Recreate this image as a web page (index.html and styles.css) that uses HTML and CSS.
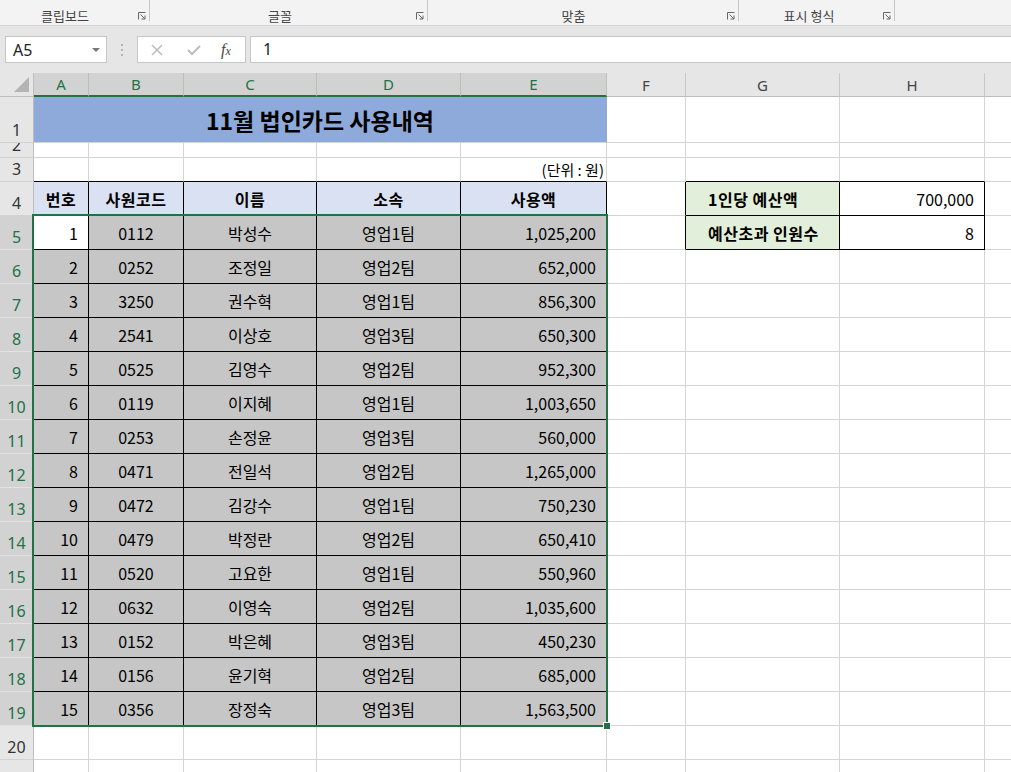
FILE: index.html
```html
<!DOCTYPE html>
<html>
<head>
    <title>11월 법인카드 사용내역</title>
    <link rel="stylesheet" href="styles.css">
</head>
<body>
    <div class="ribbon">
        <div class="grp g1"><span class="glabel">클립보드</span><svg class="launch" width="8" height="8" viewBox="0 0 8 8"><path d="M0.5 7.5 V0.5 H7.5 M2.5 2.5 L7 7 M7 3.5 V7 H3.5" stroke="#666" stroke-width="1" fill="none"/></svg></div><span class="sep"></span>
        <div class="grp g2"><span class="glabel">글꼴</span><svg class="launch" width="8" height="8" viewBox="0 0 8 8"><path d="M0.5 7.5 V0.5 H7.5 M2.5 2.5 L7 7 M7 3.5 V7 H3.5" stroke="#666" stroke-width="1" fill="none"/></svg></div><span class="sep"></span>
        <div class="grp g3"><span class="glabel">맞춤</span><svg class="launch" width="8" height="8" viewBox="0 0 8 8"><path d="M0.5 7.5 V0.5 H7.5 M2.5 2.5 L7 7 M7 3.5 V7 H3.5" stroke="#666" stroke-width="1" fill="none"/></svg></div><span class="sep"></span>
        <div class="grp g4"><span class="glabel">표시 형식</span><svg class="launch" width="8" height="8" viewBox="0 0 8 8"><path d="M0.5 7.5 V0.5 H7.5 M2.5 2.5 L7 7 M7 3.5 V7 H3.5" stroke="#666" stroke-width="1" fill="none"/></svg></div><span class="sep"></span>
    </div>

    <div class="fbar">
        <div class="namebox"><span>A5</span><span class="drop"></span></div>
        <div class="grip">
            <svg width="3" height="14" viewBox="0 0 3 14"><rect x="0" y="0" width="2" height="2" fill="#b4b4b4"/><rect x="0" y="5" width="2" height="2" fill="#b4b4b4"/><rect x="0" y="10" width="2" height="2" fill="#b4b4b4"/></svg>
        </div>
        <div class="fbtns">
            <svg class="fbtn" width="12" height="12" viewBox="0 0 12 12"><path d="M1 1 L11 11 M11 1 L1 11" stroke="#bdbdbd" stroke-width="1.6" fill="none"/></svg>
            <svg class="fbtn" width="14" height="12" viewBox="0 0 14 12"><path d="M1 6 L5 10 L13 2" stroke="#bdbdbd" stroke-width="2" fill="none"/></svg>
            <span class="fx">f<small>x</small></span>
        </div>
        <div class="finput">1</div>
    </div>

    <div class="sheet">
        <!-- column headers -->
        <div class="corner"><svg width="16" height="15" viewBox="0 0 16 15"><path d="M0 15 L15 0 L15 15 Z" fill="#b4b4b4"/></svg></div>
        <div class="ch on">A</div>
        <div class="ch on">B</div>
        <div class="ch on">C</div>
        <div class="ch on">D</div>
        <div class="ch on">E</div>
        <div class="ch">F</div>
        <div class="ch">G</div>
        <div class="ch">H</div>
        <div class="ch"></div>

        <!-- row 1 -->
        <div class="rh">1</div>
        <div class="c title">11월 법인카드 사용내역</div>
        <div class="c"></div><div class="c"></div><div class="c"></div><div class="c"></div>

        <!-- row 2 -->
        <div class="rh">2</div>
        <div class="c"></div><div class="c"></div><div class="c"></div><div class="c"></div><div class="c"></div>
        <div class="c"></div><div class="c"></div><div class="c"></div><div class="c"></div>

        <!-- row 3 -->
        <div class="rh">3</div>
        <div class="c bb"></div><div class="c bb"></div><div class="c bb"></div><div class="c bb"></div>
        <div class="c bb num unit">(단위 : 원)</div>
        <div class="c"></div><div class="c bb"></div><div class="c bb"></div><div class="c"></div>

        <!-- row 4 -->
        <div class="rh">4</div>
        <div class="c bk hd">번호</div>
        <div class="c bk hd">사원코드</div>
        <div class="c bk hd">이름</div>
        <div class="c bk hd">소속</div>
        <div class="c bk hd">사용액</div>
        <div class="c br"></div>
        <div class="c bk lbl">1인당 예산액</div>
        <div class="c bk num">700,000</div>
        <div class="c"></div>

        <!-- row 5 -->
        <div class="rh on">5</div>
        <div class="c bk num">1</div>
        <div class="c bk sel mid">0112</div>
        <div class="c bk sel mid">박성수</div>
        <div class="c bk sel mid">영업1팀</div>
        <div class="c bk sel num">1,025,200</div>
        <div class="c br"></div>
        <div class="c bk lbl">예산초과 인원수</div>
        <div class="c bk num">8</div>
        <div class="c"></div>

        <div class="rh on">6</div>
        <div class="c bk sel num">2</div><div class="c bk sel mid">0252</div><div class="c bk sel mid">조정일</div><div class="c bk sel mid">영업2팀</div><div class="c bk sel num">652,000</div>
        <div class="c"></div><div class="c"></div><div class="c"></div><div class="c"></div>

        <div class="rh on">7</div>
        <div class="c bk sel num">3</div><div class="c bk sel mid">3250</div><div class="c bk sel mid">권수혁</div><div class="c bk sel mid">영업1팀</div><div class="c bk sel num">856,300</div>
        <div class="c"></div><div class="c"></div><div class="c"></div><div class="c"></div>

        <div class="rh on">8</div>
        <div class="c bk sel num">4</div><div class="c bk sel mid">2541</div><div class="c bk sel mid">이상호</div><div class="c bk sel mid">영업3팀</div><div class="c bk sel num">650,300</div>
        <div class="c"></div><div class="c"></div><div class="c"></div><div class="c"></div>

        <div class="rh on">9</div>
        <div class="c bk sel num">5</div><div class="c bk sel mid">0525</div><div class="c bk sel mid">김영수</div><div class="c bk sel mid">영업2팀</div><div class="c bk sel num">952,300</div>
        <div class="c"></div><div class="c"></div><div class="c"></div><div class="c"></div>

        <div class="rh on">10</div>
        <div class="c bk sel num">6</div><div class="c bk sel mid">0119</div><div class="c bk sel mid">이지혜</div><div class="c bk sel mid">영업1팀</div><div class="c bk sel num">1,003,650</div>
        <div class="c"></div><div class="c"></div><div class="c"></div><div class="c"></div>

        <div class="rh on">11</div>
        <div class="c bk sel num">7</div><div class="c bk sel mid">0253</div><div class="c bk sel mid">손정윤</div><div class="c bk sel mid">영업3팀</div><div class="c bk sel num">560,000</div>
        <div class="c"></div><div class="c"></div><div class="c"></div><div class="c"></div>

        <div class="rh on">12</div>
        <div class="c bk sel num">8</div><div class="c bk sel mid">0471</div><div class="c bk sel mid">전일석</div><div class="c bk sel mid">영업2팀</div><div class="c bk sel num">1,265,000</div>
        <div class="c"></div><div class="c"></div><div class="c"></div><div class="c"></div>

        <div class="rh on">13</div>
        <div class="c bk sel num">9</div><div class="c bk sel mid">0472</div><div class="c bk sel mid">김강수</div><div class="c bk sel mid">영업1팀</div><div class="c bk sel num">750,230</div>
        <div class="c"></div><div class="c"></div><div class="c"></div><div class="c"></div>

        <div class="rh on">14</div>
        <div class="c bk sel num">10</div><div class="c bk sel mid">0479</div><div class="c bk sel mid">박정란</div><div class="c bk sel mid">영업2팀</div><div class="c bk sel num">650,410</div>
        <div class="c"></div><div class="c"></div><div class="c"></div><div class="c"></div>

        <div class="rh on">15</div>
        <div class="c bk sel num">11</div><div class="c bk sel mid">0520</div><div class="c bk sel mid">고요한</div><div class="c bk sel mid">영업1팀</div><div class="c bk sel num">550,960</div>
        <div class="c"></div><div class="c"></div><div class="c"></div><div class="c"></div>

        <div class="rh on">16</div>
        <div class="c bk sel num">12</div><div class="c bk sel mid">0632</div><div class="c bk sel mid">이영숙</div><div class="c bk sel mid">영업2팀</div><div class="c bk sel num">1,035,600</div>
        <div class="c"></div><div class="c"></div><div class="c"></div><div class="c"></div>

        <div class="rh on">17</div>
        <div class="c bk sel num">13</div><div class="c bk sel mid">0152</div><div class="c bk sel mid">박은혜</div><div class="c bk sel mid">영업3팀</div><div class="c bk sel num">450,230</div>
        <div class="c"></div><div class="c"></div><div class="c"></div><div class="c"></div>

        <div class="rh on">18</div>
        <div class="c bk sel num">14</div><div class="c bk sel mid">0156</div><div class="c bk sel mid">윤기혁</div><div class="c bk sel mid">영업2팀</div><div class="c bk sel num">685,000</div>
        <div class="c"></div><div class="c"></div><div class="c"></div><div class="c"></div>

        <div class="rh on">19</div>
        <div class="c bk sel num">15</div><div class="c bk sel mid">0356</div><div class="c bk sel mid">장정숙</div><div class="c bk sel mid">영업3팀</div><div class="c bk sel num">1,563,500</div>
        <div class="c"></div><div class="c"></div><div class="c"></div><div class="c"></div>

        <div class="rh">20</div>
        <div class="c"></div><div class="c"></div><div class="c"></div><div class="c"></div><div class="c"></div>
        <div class="c"></div><div class="c"></div><div class="c"></div><div class="c"></div>

        <div class="rh">21</div>
        <div class="c"></div><div class="c"></div><div class="c"></div><div class="c"></div><div class="c"></div>
        <div class="c"></div><div class="c"></div><div class="c"></div><div class="c"></div>

        <!-- selection box A5:E19 -->
        <div class="selbox"><span class="handle"></span></div>
    </div>
</body>
</html>
```

FILE: styles.css
```css
body
{
    margin: 0;
    width: 1011px;
    height: 772px;
    overflow: hidden;
    font-family: "Noto Sans", "Noto Sans CJK KR", sans-serif;
    background-color: #ffffff;
}

/* ribbon group labels */
.ribbon
{
    display: flex;
    height: 25px;
    background-color: #f3f3f3;
    border-bottom: 1px solid #d4d4d4;
    font-family: "Noto Sans CJK KR", sans-serif;
    font-size: 13px;
    color: #444;
}
.grp
{
    display: flex;
    align-items: flex-start;
    height: 25px;
}
.g1 { width: 149px; }
.g2 { width: 277px; }
.g3 { width: 310px; }
.g4 { width: 155px; }
.glabel
{
    flex: 1;
    text-align: center;
    line-height: 18px;
    padding-top: 7px;
}
.g1 .glabel { padding-right: 4px; }
.g2 .glabel { padding-right: 2px; }
.g3 .glabel { padding-right: 4px; }
.launch
{
    margin: 12px 3px 0 4px;
}
.sep
{
    width: 1px;
    height: 21px;
    background-color: #c6c6c6;
}

/* formula bar */
.fbar
{
    display: flex;
    align-items: flex-start;
    height: 37px;
    padding-top: 10px;
    background-color: #e6e6e6;
}
.namebox
{
    display: flex;
    align-items: center;
    justify-content: space-between;
    box-sizing: border-box;
    width: 102px;
    height: 27px;
    margin-left: 5px;
    padding: 0 6px 0 7px;
    background-color: #fff;
    border: 1px solid #c6c6c6;
    font-size: 16px;
    color: #222;
}
.drop
{
    width: 0;
    height: 0;
    border-left: 4px solid transparent;
    border-right: 4px solid transparent;
    border-top: 4px solid #777;
}
.grip
{
    width: 30px;
    height: 27px;
    display: flex;
    align-items: center;
    justify-content: center;
    padding-top: 3px;
    box-sizing: border-box;
}
.fbtns
{
    display: flex;
    align-items: center;
    box-sizing: border-box;
    width: 109px;
    height: 27px;
    padding-left: 13px;
    background-color: #fff;
    border: 1px solid #c6c6c6;
}
.fbtn
{
    margin-right: 24px;
}
.fbtn + .fbtn
{
    margin-right: 20px;
}
.fx
{
    font-family: "Liberation Serif", serif;
    font-style: italic;
    font-size: 16px;
    color: #444;
}
.fx small
{
    font-size: 12px;
}
.finput
{
    flex: 1;
    box-sizing: border-box;
    height: 27px;
    margin-left: 4px;
    margin-right: -2px;
    padding-left: 12px;
    line-height: 25px;
    background-color: #fff;
    border: 1px solid #c6c6c6;
    font-size: 16px;
    color: #222;
}

/* sheet grid */
.sheet
{
    position: relative;
    display: grid;
    grid-template-columns: 34px 55px 95px 133px 144px 146px 79px 154px 145px 60px;
    grid-template-rows: 24px 46px 15px 24px repeat(18, 34px);
    height: 699px;
    overflow: hidden;
    font-family: "Noto Sans CJK KR", sans-serif;
    font-size: 16px;
    color: #000;
}
.corner
{
    display: flex;
    align-items: flex-end;
    justify-content: flex-end;
    padding: 0 3px 4px 0;
    background-color: #e6e6e6;
    border-right: 1px solid #bdbdbd;
    border-bottom: 1px solid #bdbdbd;
}
.ch
{
    display: flex;
    align-items: center;
    justify-content: center;
    box-sizing: border-box;
    background-color: #e6e6e6;
    border-right: 1px solid #c8c8c8;
    border-bottom: 1px solid #bdbdbd;
    font-family: "Noto Sans", sans-serif;
    font-size: 15px;
    color: #444;
}
.ch.on
{
    background-color: #d2d2d2;
    color: #217346;
    border-bottom: 2px solid #217346;
    border-right-color: #bdbdbd;
}
.rh
{
    display: flex;
    align-items: flex-end;
    justify-content: center;
    box-sizing: border-box;
    overflow: hidden;
    padding-bottom: 2px;
    line-height: 20px;
    background-color: #e6e6e6;
    border-right: 1px solid #bdbdbd;
    border-bottom: 1px solid #d2d2d2;
    font-family: "Noto Sans", sans-serif;
    font-size: 16px;
    color: #333;
}
.rh.on
{
    background-color: #d2d2d2;
    color: #217346;
    border-bottom-color: #e2e2e2;
}
.c
{
    display: flex;
    align-items: center;
    box-sizing: border-box;
    overflow: hidden;
    white-space: nowrap;
    border-right: 1px solid #d4d4d4;
    border-bottom: 1px solid #d4d4d4;
}
.bk
{
    border-right-color: #000;
    border-bottom-color: #000;
}
.bb
{
    border-bottom-color: #000;
}
.br
{
    border-right-color: #000;
}
.title
{
    grid-column: span 5;
    justify-content: center;
    background-color: #8eaadb;
    border-right-color: #8eaadb;
    font-size: 23px;
    font-weight: bold;
    padding-top: 1px;
}
.hd
{
    justify-content: center;
    background-color: #d9e1f2;
    font-weight: bold;
    letter-spacing: 0.5px;
}
.sel
{
    background-color: #c6c6c6;
}
.mid
{
    justify-content: center;
}
.num
{
    justify-content: flex-end;
    padding-right: 10px;
}
.unit
{
    font-size: 15px;
    padding-right: 2px;
    align-items: flex-end;
    padding-bottom: 1px;
}
.lbl
{
    padding-left: 22px;
    background-color: #e2efda;
    font-weight: bold;
    letter-spacing: 0.5px;
}

/* selection outline, drawn over A5:E19 */
.selbox
{
    position: absolute;
    grid-column: 2 / 7;
    grid-row: 6 / 21;
    top: -2px;
    left: -2px;
    right: -1px;
    bottom: -1px;
    border: 2px solid #217346;
    pointer-events: none;
}
.handle
{
    position: absolute;
    right: -5px;
    bottom: -5px;
    width: 6px;
    height: 6px;
    background-color: #217346;
    border: 1px solid #fff;
}
```
